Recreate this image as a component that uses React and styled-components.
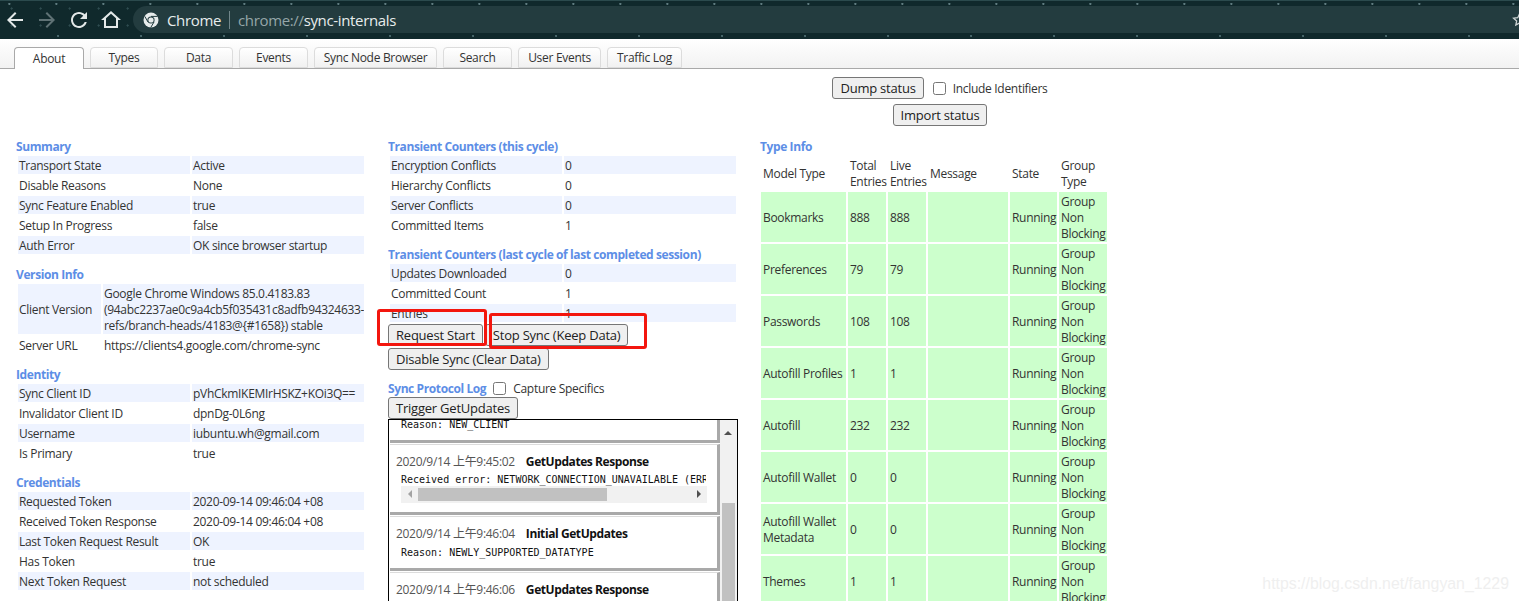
import styled, { createGlobalStyle } from "styled-components";

const UI_FONT = `"Open Sans", "Noto Sans CJK SC", sans-serif`;

const GlobalStyle = createGlobalStyle`
  html, body {
    margin: 0;
    padding: 0;
    height: 601px;
    overflow: hidden;
    background: #fff;
  }
  body {
    font-family: ${UI_FONT};
    font-size: 12px;
    color: #222;
  }
`;

const summary = [
  ["Transport State", "Active"],
  ["Disable Reasons", "None"],
  ["Sync Feature Enabled", "true"],
  ["Setup In Progress", "false"],
  ["Auth Error", "OK since browser startup"],
];
const versionInfo = [
  [
    "Client Version",
    <>
      Google Chrome Windows 85.0.4183.83
      <br />
      (94abc2237ae0c9a4cb5f035431c8adfb94324633-
      <br />
      refs/branch-heads/4183@{"{#1658}"}) stable
    </>,
  ],
  ["Server URL", "https://clients4.google.com/chrome-sync"],
];
const identity = [
  ["Sync Client ID", "pVhCkmIKEMIrHSKZ+KOi3Q=="],
  ["Invalidator Client ID", "dpnDg-0L6ng"],
  ["Username", "iubuntu.wh@gmail.com"],
  ["Is Primary", "true"],
];
const credentials = [
  ["Requested Token", "2020-09-14 09:46:04 +08"],
  ["Received Token Response", "2020-09-14 09:46:04 +08"],
  ["Last Token Request Result", "OK"],
  ["Has Token", "true"],
  ["Next Token Request", "not scheduled"],
];
const thisCycle = [
  ["Encryption Conflicts", "0"],
  ["Hierarchy Conflicts", "0"],
  ["Server Conflicts", "0"],
  ["Committed Items", "1"],
];
const lastCycle = [
  ["Updates Downloaded", "0"],
  ["Committed Count", "1"],
  ["Entries", "1"],
];
const types = [
  ["Bookmarks", "888", "888"],
  ["Preferences", "79", "79"],
  ["Passwords", "108", "108"],
  ["Autofill Profiles", "1", "1"],
  ["Autofill", "232", "232"],
  ["Autofill Wallet", "0", "0"],
  ["Autofill Wallet Metadata", "0", "0"],
  ["Themes", "1", "1"],
];
const tabs = [
  ["About", 70],
  ["Types", 68],
  ["Data", 69],
  ["Events", 69],
  ["Sync Node Browser", 123],
  ["Search", 69],
  ["User Events", 83],
  ["Traffic Log", 75],
];

const Page = styled.div`
  position: relative;
  width: 1519px;
  height: 601px;
  overflow: hidden;
`;

const Toolbar = styled.div`
  height: 39px;
  box-sizing: border-box;
  padding-top: 6px;
  background-color: #10292c;
  box-shadow: inset 0 1px #2b4a4d;
  background-image:
    radial-gradient(circle at 20% 10%, #5f7c80 0 0.8px, transparent 1.4px),
    radial-gradient(circle at 70% 92%, #47666a 0 0.8px, transparent 1.4px),
    radial-gradient(circle at 40% 50%, #2f4c50 0 0.8px, transparent 1.4px);
  background-size: 47px 39px, 83px 39px, 29px 17px;
`;

const NavIcons = styled.div`
  float: left;
  display: flex;
  width: 133px;
  height: 27px;
  align-items: center;
  padding-left: 3px;
  box-sizing: border-box;
  gap: 8px;
`;

const NavIcon = styled.svg`
  width: 24px;
  height: 24px;
  fill: ${(p) => (p.$dim ? "#5f7275" : "#e3e8e8")};
`;

const Omnibox = styled.div`
  margin-left: 133px;
  height: 27px;
  display: flex;
  align-items: center;
  background: #233c3f;
  border-radius: 14px 0 0 14px;
  padding-left: 10px;
  font-size: 15px;
  letter-spacing: -0.35px;
  color: #e8eded;
  position: relative;
`;

const SiteName = styled.span`
  margin-left: 8px;
`;

const Divider = styled.span`
  width: 1px;
  height: 18px;
  background: #71868a;
  margin: 0 8px;
`;

const UrlScheme = styled.span`
  color: #95a6a8;
`;

const Star = styled.svg`
  position: absolute;
  left: 1379px;
  top: 6px;
  width: 15px;
  height: 15px;
  fill: none;
  stroke: #cfd6d6;
  stroke-width: 2;
`;

const TabStrip = styled.div`
  height: 30px;
  box-sizing: border-box;
  padding: 8px 0 0 14px;
  display: flex;
  gap: 6px;
  background: linear-gradient(#fff, #f2f2f2);
  border-bottom: 1px solid #a9a9a9;
`;

const Tab = styled.div`
  width: ${(p) => p.$w}px;
  height: ${(p) => (p.$active ? 22 : 21)}px;
  box-sizing: border-box;
  display: flex;
  align-items: center;
  justify-content: center;
  border: 1px solid ${(p) => (p.$active ? "#a9a9a9" : "#dcdcdc")};
  border-bottom: ${(p) => (p.$active ? "none" : "1px solid #dcdcdc")};
  border-radius: 4px 4px 0 0;
  background: ${(p) => (p.$active ? "#fff" : "linear-gradient(#fff, #f1f1f1)")};
  color: #333;
  letter-spacing: -0.3px;
`;

const StatusControls = styled.div`
  width: 214px;
  margin: 8px 0 0 833px;
  display: flex;
  flex-direction: column;
  align-items: center;
  gap: 5px;
`;

const StatusRow = styled.div`
  display: flex;
  align-items: center;
  white-space: nowrap;
`;

const Button = styled.button`
  height: 22px;
  box-sizing: border-box;
  padding: 0 7px;
  background: #efefef;
  border: 1px solid #767676;
  border-radius: 3px;
  font-family: ${UI_FONT};
  font-size: 13px;
  letter-spacing: -0.22px;
  color: #222;
  white-space: nowrap;
`;

const TriggerButton = styled(Button)`
  display: block;
  margin-top: 1px;
`;

const CheckBox = styled.span`
  width: 13px;
  height: 13px;
  box-sizing: border-box;
  background: #fff;
  border: 1px solid #767676;
  border-radius: 2.5px;
`;

const StatusCheck = styled(CheckBox)`
  margin-left: 9px;
`;

const CheckLabel = styled.span`
  margin-left: 7px;
  letter-spacing: -0.3px;
  color: #333;
`;

const Columns = styled.div`
  display: flex;
  gap: 22px;
  margin: 13px 0 0 16px;
`;

const Column = styled.div`
  width: 350px;
  flex: none;
`;

const Heading = styled.h2`
  margin: ${(p) => (p.$first ? 0 : "11px 0 0")};
  font-size: 12px;
  line-height: 15px;
  font-weight: 700;
  color: #5d8ee6;
  letter-spacing: -0.4px;
  white-space: nowrap;
`;

const InfoTable = styled.table`
  width: 350px;
  table-layout: fixed;
  border-collapse: separate;
  border-spacing: 2px;
  letter-spacing: -0.3px;
  color: #333;
`;

const InfoRow = styled.tr`
  background: ${(p) => (p.$shade ? "#eef3ff" : "transparent")};
`;

const InfoCell = styled.td`
  width: ${(p) => p.$w || "auto"};
  padding: 2px 1px 0;
  line-height: 16px;
  white-space: nowrap;
  overflow: hidden;
`;

const ButtonRow = styled.div`
  display: flex;
  gap: 2px;
  margin-bottom: 2px;
`;

const LogHeader = styled.div`
  display: flex;
  align-items: center;
  margin-top: 11px;
  height: 15px;
`;

const LogHeading = styled(Heading)`
  margin: 0 7px 0 0;
`;

const Log = styled.div`
  position: relative;
  height: 190px;
  width: 350px;
  box-sizing: border-box;
  border: 1px solid #000;
  border-bottom: none;
  overflow: hidden;
  padding: 0 17px 0 1px;
`;

const LogEntry = styled.div`
  box-sizing: border-box;
  height: ${(p) => p.$h}px;
  padding: ${(p) => (p.$first ? 0 : 9)}px 0 0 6px;
  background: #fff;
  border-right: 3px solid #a9a9a9;
  border-bottom: 3px solid #a9a9a9;
  border-top: ${(p) => (p.$first ? "none" : "1px solid #dcdcdc")};
  margin-bottom: 1px;
`;

const LogTitleRow = styled.div`
  line-height: 16px;
  white-space: nowrap;
  color: #555;
  letter-spacing: -0.3px;
`;

const LogTitle = styled.b`
  margin-left: 11px;
  color: #111;
  letter-spacing: -0.42px;
`;

const Mono = styled.div`
  margin: ${(p) => p.$gap}px 0 0 5px;
  font-family: "DejaVu Sans Mono", "Liberation Mono", monospace;
  font-size: 10px;
  line-height: 12px;
  width: 305px;
  overflow: hidden;
  white-space: nowrap;
  color: #111;
`;

const HScroll = styled.div`
  position: relative;
  width: 306px;
  height: 17px;
  margin-left: 5px;
  background: #f1f1f1;
`;

const HThumb = styled.div`
  position: absolute;
  left: 17px;
  top: 2px;
  width: 189px;
  height: 13px;
  background: #c1c1c1;
`;

const Arrow = styled.span`
  position: absolute;
  top: ${(p) => p.$top}px;
  ${(p) => (p.$right ? `right: ${p.$right}px` : `left: ${p.$left}px`)};
  width: 0;
  height: 0;
  border: 4px solid transparent;
  ${(p) => `border-${p.$dir}-color: ${p.$color};`}
`;

const VScroll = styled.div`
  position: absolute;
  top: 0;
  right: 0;
  bottom: 0;
  width: 17px;
  background: #f1f1f1;
`;

const VThumb = styled.div`
  position: absolute;
  left: 2px;
  top: 83px;
  bottom: 0;
  width: 13px;
  background: #c1c1c1;
`;

const TypeTable = styled.table`
  margin-left: -1px;
  width: 350px;
  table-layout: fixed;
  border-collapse: separate;
  border-spacing: 2px;
  letter-spacing: -0.3px;
  color: #333;
`;

const TypeHead = styled.th`
  width: ${(p) => p.$w}px;
  box-sizing: border-box;
  padding: 2px 0 0 2px;
  font-weight: 400;
  text-align: left;
  line-height: 16px;
`;

const TypeCell = styled.td`
  padding: 2px 0 0 2px;
  line-height: 16px;
  background: #ccffcc;
`;

const RedBox = styled.div`
  position: absolute;
  left: ${(p) => p.$x}px;
  top: ${(p) => p.$y}px;
  width: ${(p) => p.$w}px;
  height: ${(p) => p.$h}px;
  box-sizing: border-box;
  border: 3px solid #f3160e;
  border-radius: 3px;
`;

const Watermark = styled.div`
  position: absolute;
  right: 10px;
  top: 575px;
  font-family: "Liberation Sans", Arial, sans-serif;
  font-size: 15.85px;
  color: #efefef;
`;

function Info({ rows, firstWidth }) {
  return (
    <InfoTable>
      <tbody>
        {rows.map(([label, value], i) => (
          <InfoRow key={label} $shade={i % 2 === 0}>
            <InfoCell $w={firstWidth}>{label}</InfoCell>
            <InfoCell>{value}</InfoCell>
          </InfoRow>
        ))}
      </tbody>
    </InfoTable>
  );
}

export default function App() {
  return (
    <Page>
      <GlobalStyle />
      <Toolbar>
        <NavIcons>
          <NavIcon viewBox="0 0 24 24">
            <path d="M20 11H7.83l5.59-5.59L12 4l-8 8 8 8 1.41-1.41L7.83 13H20v-2z" />
          </NavIcon>
          <NavIcon viewBox="0 0 24 24" $dim>
            <path d="M4 11h12.17l-5.59-5.59L12 4l8 8-8 8-1.41-1.41L16.17 13H4v-2z" />
          </NavIcon>
          <NavIcon viewBox="0 0 24 24">
            <path d="M17.65 6.35C16.2 4.9 14.21 4 12 4c-4.42 0-7.99 3.58-7.99 8s3.57 8 7.99 8c3.73 0 6.84-2.55 7.73-6h-2.08c-.82 2.33-3.04 4-5.65 4-3.31 0-6-2.69-6-6s2.69-6 6-6c1.66 0 3.14.69 4.22 1.78L13 11h7V4l-2.35 2.35z" />
          </NavIcon>
          <NavIcon viewBox="0 0 24 24">
            <path d="M12 5.69l5 4.5V18H7v-7.81l5-4.5M12 3L2 12h3v8h14v-8h3L12 3z" />
          </NavIcon>
        </NavIcons>
        <Omnibox>
          <svg width="16" height="16" viewBox="0 0 16 16">
            <circle cx="8" cy="8" r="7.5" fill="#e6ebeb" />
            <circle cx="8" cy="8" r="3.6" fill="#233c3f" />
            <circle cx="8" cy="8" r="2.6" fill="#e6ebeb" />
            <path d="M8 4.4h6.6M5 10l-3.2-5.6M11 10l-3.3 5.6" stroke="#233c3f" strokeWidth="1" />
          </svg>
          <SiteName>Chrome</SiteName>
          <Divider />
          <UrlScheme>chrome://</UrlScheme>
          <span>sync-internals</span>
          <Star viewBox="0 0 24 24">
            <path d="M12 3l2.8 6.1 6.7.7-5 4.5 1.4 6.6L12 17.5l-5.9 3.4 1.4-6.6-5-4.5 6.7-.7z" />
          </Star>
        </Omnibox>
      </Toolbar>

      <TabStrip>
        {tabs.map(([name, w], i) => (
          <Tab key={name} $w={w} $active={i === 0}>
            {name}
          </Tab>
        ))}
      </TabStrip>

      <StatusControls>
        <StatusRow>
          <Button>Dump status</Button>
          <StatusCheck />
          <CheckLabel>Include Identifiers</CheckLabel>
        </StatusRow>
        <Button>Import status</Button>
      </StatusControls>

      <Columns>
        <Column>
          <Heading $first>Summary</Heading>
          <Info rows={summary} firstWidth="170px" />
          <Heading>Version Info</Heading>
          <Info rows={versionInfo} firstWidth="81px" />
          <Heading>Identity</Heading>
          <Info rows={identity} firstWidth="170px" />
          <Heading>Credentials</Heading>
          <Info rows={credentials} firstWidth="170px" />
        </Column>

        <Column>
          <Heading $first>Transient Counters (this cycle)</Heading>
          <Info rows={thisCycle} firstWidth="170px" />
          <Heading>Transient Counters (last cycle of last completed session)</Heading>
          <Info rows={lastCycle} firstWidth="170px" />
          <ButtonRow>
            <Button>Request Start</Button>
            <Button>Stop Sync (Keep Data)</Button>
          </ButtonRow>
          <Button>Disable Sync (Clear Data)</Button>
          <LogHeader>
            <LogHeading>Sync Protocol Log</LogHeading>
            <CheckBox />
            <CheckLabel>Capture Specifics</CheckLabel>
          </LogHeader>
          <TriggerButton>Trigger GetUpdates</TriggerButton>
          <Log>
            <LogEntry $first $h={24}>
              <Mono $gap={-1}>Reason: NEW_CLIENT</Mono>
            </LogEntry>
            <LogEntry $h={71}>
              <LogTitleRow>
                2020/9/14 上午9:45:02<LogTitle>GetUpdates Response</LogTitle>
              </LogTitleRow>
              <Mono $gap={4}>Received error: NETWORK_CONNECTION_UNAVAILABLE (ERR_INTERNET)</Mono>
              <HScroll>
                <Arrow $dir="right" $color="#a3a3a3" $left={3} $top={4} />
                <HThumb />
                <Arrow $dir="left" $color="#505050" $right={2} $top={4} />
              </HScroll>
            </LogEntry>
            <LogEntry $h={55}>
              <LogTitleRow>
                2020/9/14 上午9:46:04<LogTitle>Initial GetUpdates</LogTitle>
              </LogTitleRow>
              <Mono $gap={5}>Reason: NEWLY_SUPPORTED_DATATYPE</Mono>
            </LogEntry>
            <LogEntry $h={55}>
              <LogTitleRow>
                2020/9/14 上午9:46:06<LogTitle>GetUpdates Response</LogTitle>
              </LogTitleRow>
            </LogEntry>
            <VScroll>
              <Arrow $dir="bottom" $color="#505050" $left={4} $top={7} />
              <VThumb />
            </VScroll>
          </Log>
        </Column>

        <Column>
          <Heading $first>Type Info</Heading>
          <TypeTable>
            <thead>
              <tr>
                <TypeHead $w={85}>Model Type</TypeHead>
                <TypeHead $w={38}>Total Entries</TypeHead>
                <TypeHead $w={38}>Live Entries</TypeHead>
                <TypeHead $w={80}>Message</TypeHead>
                <TypeHead $w={47}>State</TypeHead>
                <TypeHead $w={48}>Group Type</TypeHead>
              </tr>
            </thead>
            <tbody>
              {types.map(([name, total, live]) => (
                <tr key={name}>
                  <TypeCell>{name}</TypeCell>
                  <TypeCell>{total}</TypeCell>
                  <TypeCell>{live}</TypeCell>
                  <TypeCell />
                  <TypeCell>Running</TypeCell>
                  <TypeCell>Group Non Blocking</TypeCell>
                </tr>
              ))}
            </tbody>
          </TypeTable>
        </Column>
      </Columns>

      <RedBox $x={377} $y={309} $w={110} $h={37} />
      <RedBox $x={489} $y={313} $w={158} $h={36} />
      <Watermark>https://blog.csdn.net/fangyan_1229</Watermark>
    </Page>
  );
}
